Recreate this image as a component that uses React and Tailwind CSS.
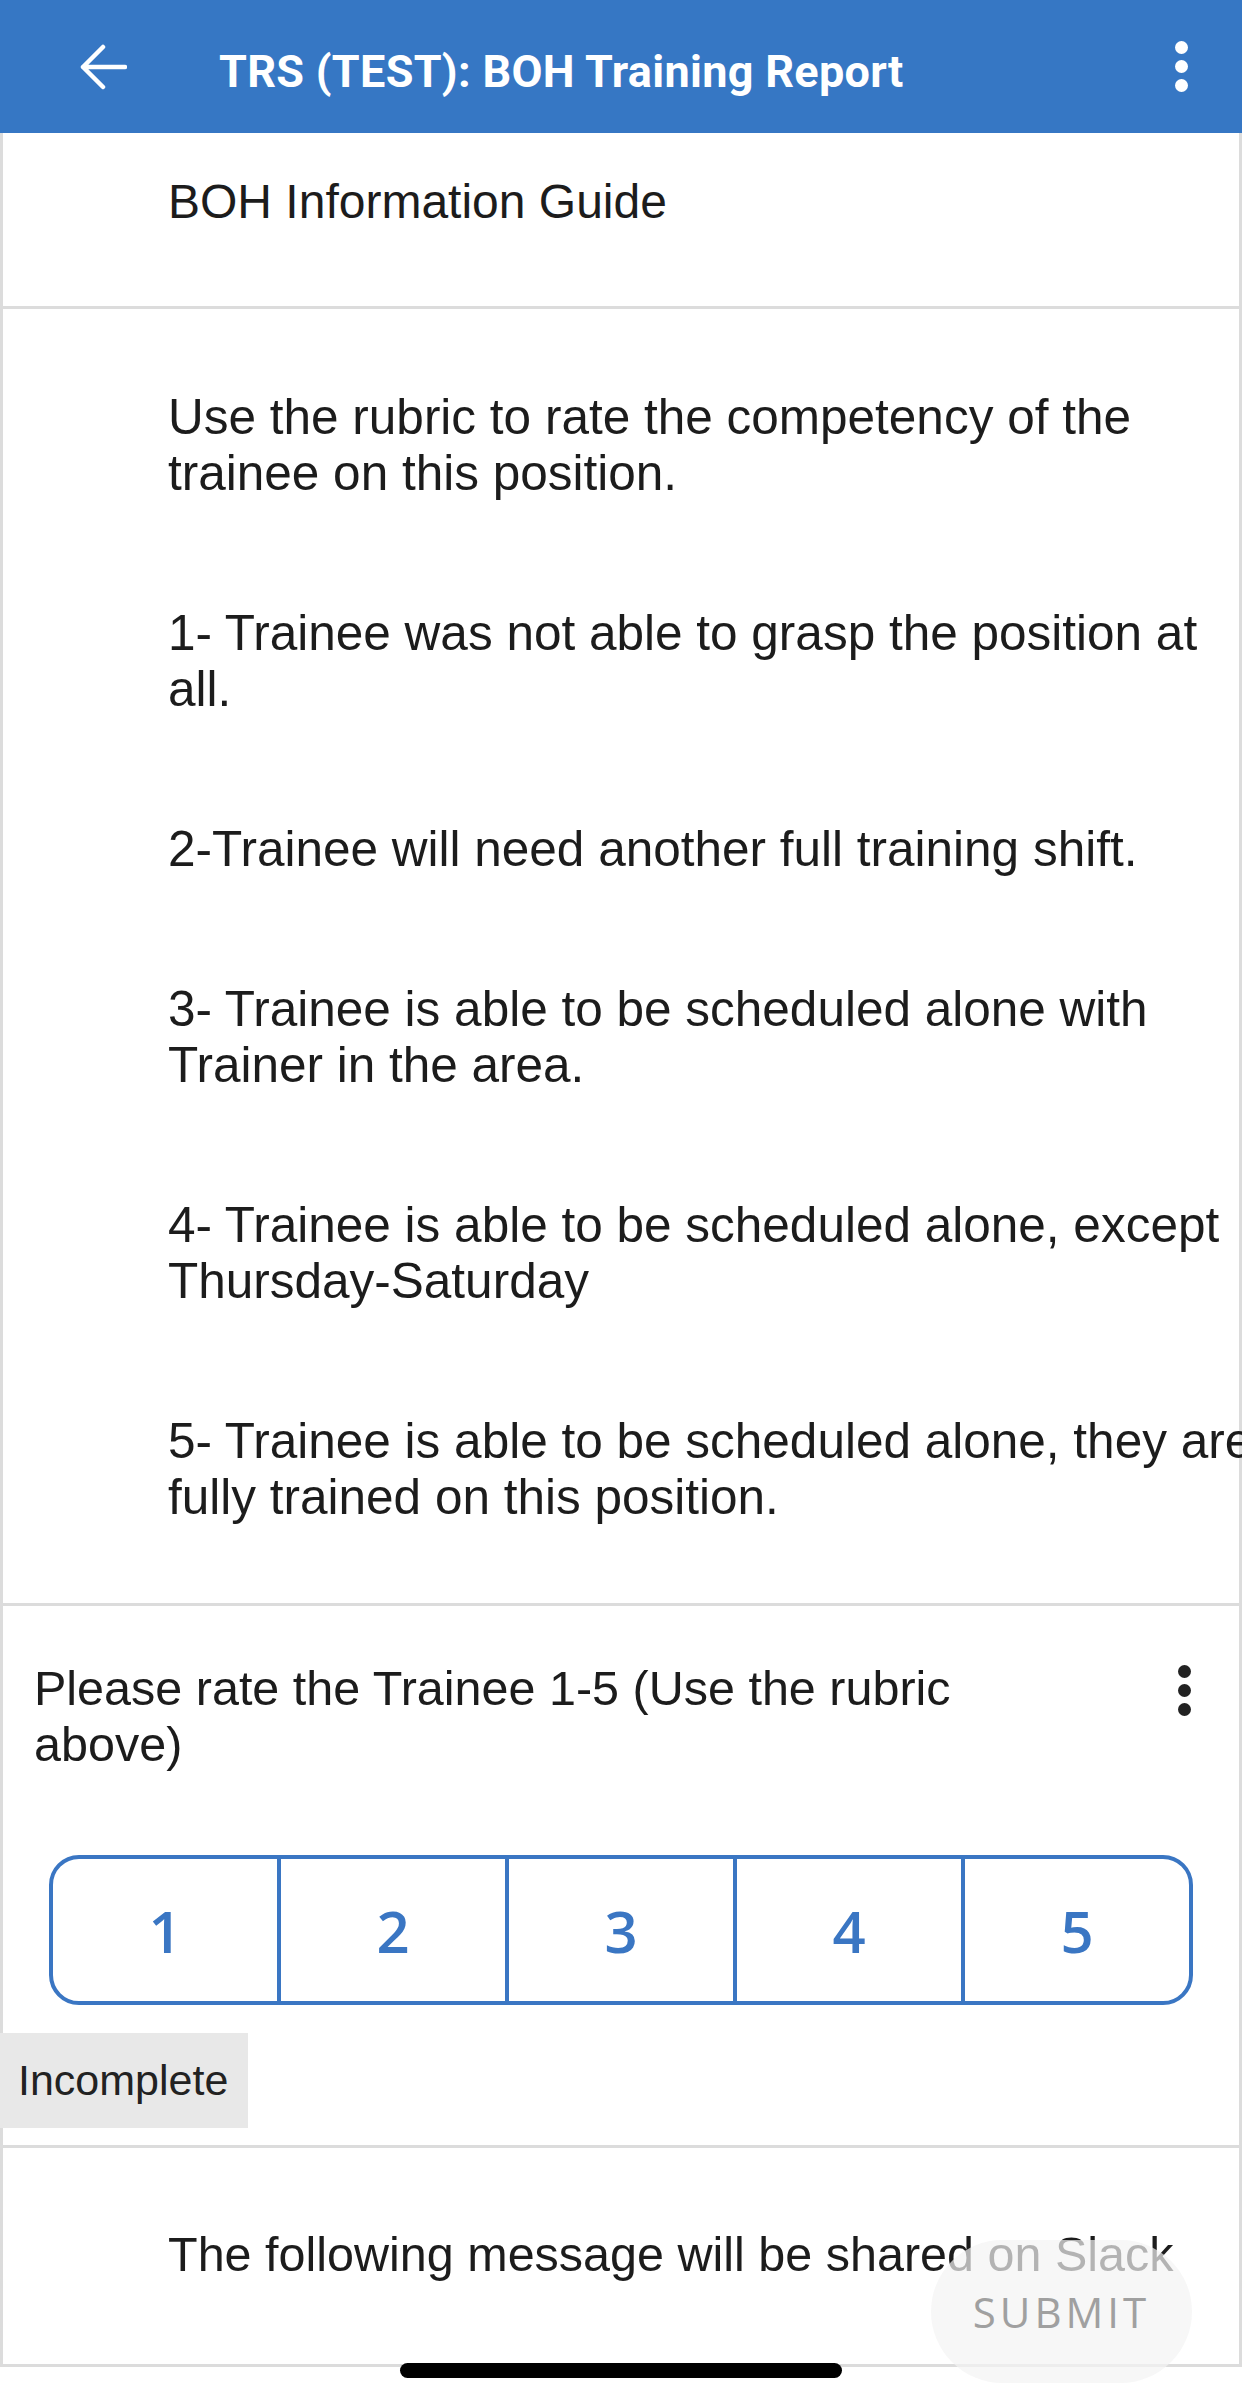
import React from "react";

const rubric = [
  ["Use the rubric to rate the competency of the", "trainee on this position."],
  ["1- Trainee was not able to grasp the position at", "all."],
  ["2-Trainee will need another full training shift."],
  ["3- Trainee is able to be scheduled alone with", "Trainer in the area."],
  ["4- Trainee is able to be scheduled alone, except", "Thursday-Saturday"],
  ["5- Trainee is able to be scheduled alone, they are", "fully trained on this position."],
];

const Kebab = ({ color }) => (
  <div className="flex flex-col items-center gap-[6px]">
    <span className={`block w-[13px] h-[13px] rounded-full ${color}`} />
    <span className={`block w-[13px] h-[13px] rounded-full ${color}`} />
    <span className={`block w-[13px] h-[13px] rounded-full ${color}`} />
  </div>
);

const App = () => {
  return (
    <div className="relative w-[1242px] h-[2402px] overflow-hidden bg-white text-[#1c1c1c] font-['Liberation_Sans',Arial,sans-serif]">
      {/* top bar */}
      <header className="h-[133px] bg-[#3677c4] flex items-center pl-[79px] pr-[54px]">
        <svg width="48" height="46" viewBox="0 0 48 46" fill="none">
          <path
            d="M46 23H4M24 3L4 23l20 20"
            stroke="white"
            strokeWidth="4.5"
            strokeLinecap="round"
            strokeLinejoin="round"
          />
        </svg>
        <h1 className="ml-[92px] mt-[10px] flex-1 text-white text-[45px] font-bold font-['Roboto',sans-serif] tracking-[0.3px]">
          TRS (TEST): BOH Training Report
        </h1>
        <Kebab color="bg-white" />
      </header>

      <div className="border-x-[3px] border-[#dcdcdc]">
        {/* guide title */}
        <div className="h-[176px] pt-[41px] pl-[165px] border-b-[3px] border-[#dcdcdc]">
          <p className="text-[48px] leading-[56px]">BOH Information Guide</p>
        </div>

        {/* rubric */}
        <div className="pt-[80px] pb-[78px] pl-[165px] flex flex-col gap-[104px] border-b-[3px] border-[#dcdcdc]">
          {rubric.map((para, i) => (
            <p key={i} className="text-[49.5px] leading-[56px] whitespace-nowrap">
              {para.map((line, j) => (
                <span key={j} className="block">
                  {line}
                </span>
              ))}
            </p>
          ))}
        </div>

        {/* rating question */}
        <div className="pt-[54px] pb-[17px] border-b-[3px] border-[#dcdcdc]">
          <div className="flex items-start justify-between pl-[31px] pr-[48px]">
            <p className="text-[48.5px] leading-[56px]">
              <span className="block">Please rate the Trainee 1-5 (Use the rubric</span>
              <span className="block">above)</span>
            </p>
            <div className="mt-[5px]">
              <Kebab color="bg-[#222]" />
            </div>
          </div>

          <div className="ml-[46px] mt-[83px] w-[1144px] h-[150px] flex border-[4px] border-[#3a76c3] rounded-[30px] overflow-hidden">
            {[1, 2, 3, 4, 5].map((n) => (
              <button
                key={n}
                className={`flex-1 flex items-center justify-center text-[58px] font-semibold text-[#3a76c3] font-['Open_Sans',sans-serif] ${
                  n > 1 ? "border-l-[4px] border-[#3a76c3]" : ""
                }`}
              >
                {n}
              </button>
            ))}
          </div>

          <div className="-ml-[3px] mt-[28px] w-[248px] h-[95px] bg-[#e8e8e8] flex items-center pl-[18px]">
            <span className="text-[43px] text-[#222]">Incomplete</span>
          </div>
        </div>

        {/* slack message */}
        <div className="pt-[78px] pb-[82px] pl-[165px] border-b-[3px] border-[#dcdcdc]">
          <p className="text-[48.5px] leading-[56px] whitespace-nowrap">
            The following message will be shared on Slack
          </p>
        </div>
      </div>

      {/* floating submit */}
      <button className="absolute left-[931px] top-[2240px] w-[261px] h-[143px] rounded-full bg-[#f4f4f4]/70 flex items-center justify-center">
        <span className="text-[42px] tracking-[4px] text-[#a0a0a0] font-['Open_Sans',sans-serif]">
          SUBMIT
        </span>
      </button>

      {/* home indicator */}
      <div className="absolute left-[400px] top-[2363px] w-[442px] h-[15px] rounded-full bg-black" />
    </div>
  );
};

export default App;
